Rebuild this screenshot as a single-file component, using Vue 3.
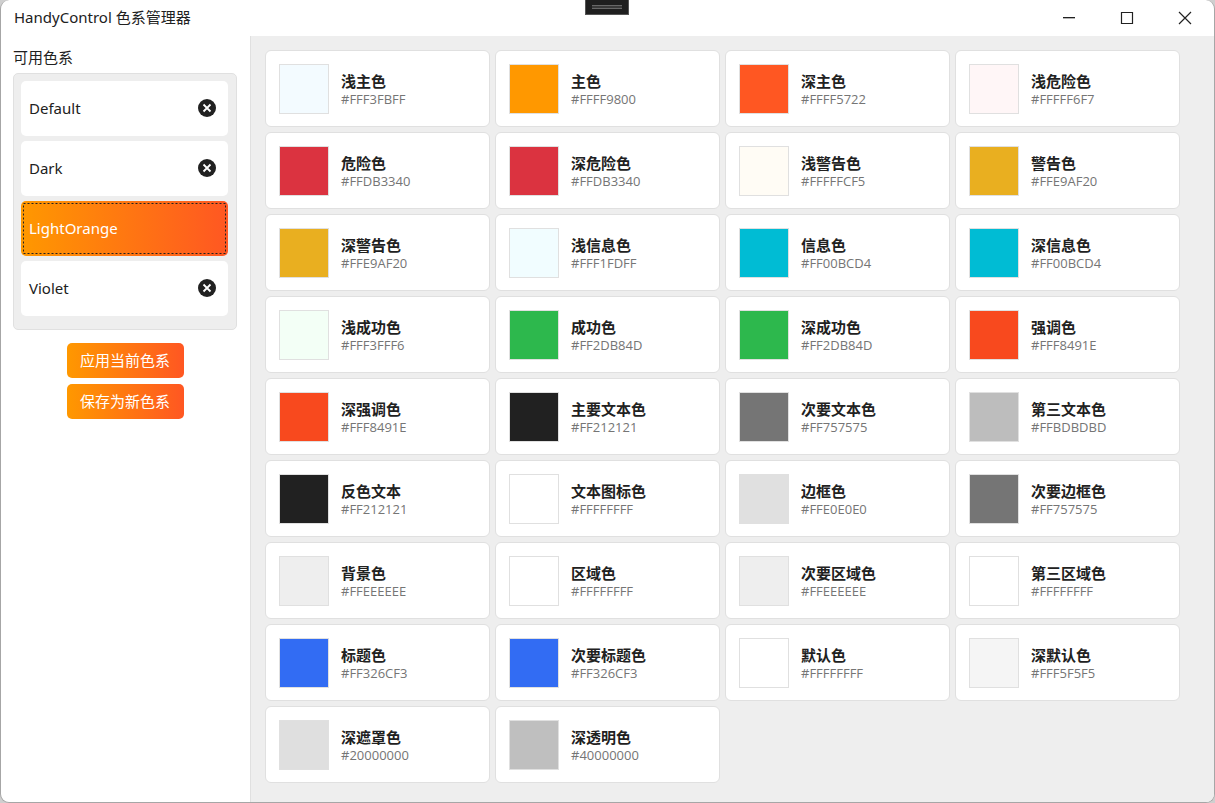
<template>
  <div class="window">
    <header class="titlebar">
      <h1>HandyControl 色系管理器</h1>
      <div class="window-buttons">
        <button type="button" aria-label="最小化">
          <svg width="14" height="14" viewBox="0 0 14 14">
            <path d="M1 6h12v1H1z" fill="#212121" />
            <path d="M1 7h12v1H1z" fill="#b4b4b4" />
          </svg>
        </button>
        <button type="button" aria-label="最大化">
          <svg width="14" height="14" viewBox="0 0 14 14">
            <path d="M1.5 1.5h11v11h-11z" fill="none" stroke="#212121" stroke-width="1.2" />
          </svg>
        </button>
        <button type="button" aria-label="关闭">
          <svg width="14" height="14" viewBox="0 0 14 14">
            <path d="M1 1l12 12M13 1L1 13" fill="none" stroke="#212121" stroke-width="1.2" />
          </svg>
        </button>
      </div>
      <div class="debug-handle"><span></span></div>
    </header>

    <div class="body">
      <aside class="sidebar">
        <h2>可用色系</h2>
        <ul class="schemes">
          <li
            v-for="scheme in schemes"
            :key="scheme"
            class="scheme"
            :class="{ selected: scheme === selected }"
          >
            <button type="button" class="scheme-name" @click="selected = scheme">{{ scheme }}</button>
            <button
              v-if="scheme !== selected"
              type="button"
              class="remove"
              aria-label="删除"
              @click="removeScheme(scheme)"
            >
              <svg width="18" height="18" viewBox="0 0 18 18">
                <circle cx="9" cy="9" r="9" fill="#212121" />
                <path d="M5.5 5.5l7 7M12.5 5.5l-7 7" stroke="#fff" stroke-width="1.8" />
              </svg>
            </button>
            <svg v-if="scheme === selected" class="focus-rect">
              <rect x="0.5" y="0.5" />
            </svg>
          </li>
        </ul>
        <div class="actions">
          <button type="button">应用当前色系</button>
          <button type="button">保存为新色系</button>
        </div>
      </aside>

      <main class="colors">
        <div v-for="color in colors" :key="color.name" class="card">
          <div class="swatch" :style="{ background: toCss(color.value) }"></div>
          <div class="card-text">
            <strong>{{ color.name }}</strong>
            <span>{{ color.value }}</span>
          </div>
        </div>
      </main>
    </div>
  </div>
</template>

<script setup>
import { ref } from "vue"

const schemes = ref(["Default", "Dark", "LightOrange", "Violet"])
const selected = ref("LightOrange")

const colors = ref([
  { name: "浅主色", value: "#FFF3FBFF" },
  { name: "主色", value: "#FFFF9800" },
  { name: "深主色", value: "#FFFF5722" },
  { name: "浅危险色", value: "#FFFFF6F7" },
  { name: "危险色", value: "#FFDB3340" },
  { name: "深危险色", value: "#FFDB3340" },
  { name: "浅警告色", value: "#FFFFFCF5" },
  { name: "警告色", value: "#FFE9AF20" },
  { name: "深警告色", value: "#FFE9AF20" },
  { name: "浅信息色", value: "#FFF1FDFF" },
  { name: "信息色", value: "#FF00BCD4" },
  { name: "深信息色", value: "#FF00BCD4" },
  { name: "浅成功色", value: "#FFF3FFF6" },
  { name: "成功色", value: "#FF2DB84D" },
  { name: "深成功色", value: "#FF2DB84D" },
  { name: "强调色", value: "#FFF8491E" },
  { name: "深强调色", value: "#FFF8491E" },
  { name: "主要文本色", value: "#FF212121" },
  { name: "次要文本色", value: "#FF757575" },
  { name: "第三文本色", value: "#FFBDBDBD" },
  { name: "反色文本", value: "#FF212121" },
  { name: "文本图标色", value: "#FFFFFFFF" },
  { name: "边框色", value: "#FFE0E0E0" },
  { name: "次要边框色", value: "#FF757575" },
  { name: "背景色", value: "#FFEEEEEE" },
  { name: "区域色", value: "#FFFFFFFF" },
  { name: "次要区域色", value: "#FFEEEEEE" },
  { name: "第三区域色", value: "#FFFFFFFF" },
  { name: "标题色", value: "#FF326CF3" },
  { name: "次要标题色", value: "#FF326CF3" },
  { name: "默认色", value: "#FFFFFFFF" },
  { name: "深默认色", value: "#FFF5F5F5" },
  { name: "深遮罩色", value: "#20000000" },
  { name: "深透明色", value: "#40000000" }
])

// #AARRGGBB -> #RRGGBBAA
function toCss(value) {
  return "#" + value.slice(3) + value.slice(1, 3)
}

function removeScheme(scheme) {
  schemes.value = schemes.value.filter(s => s !== scheme)
}
</script>

<style>
body {
  background: #cfcfcf;
}
</style>

<style scoped>
.window {
  display: flex;
  flex-direction: column;
  box-sizing: border-box;
  min-height: 100vh;
  border: 1px solid #a6a6a6;
  border-top: 0;
  border-radius: 9px;
  overflow: hidden;
  background: #fff;
  color: #212121;
  font-family: "Noto Sans", "Noto Sans CJK SC", sans-serif;
  font-size: 15px;
}

button {
  padding: 0;
  border: 0;
  background: none;
  color: inherit;
  font: inherit;
  cursor: pointer;
}

svg {
  display: block;
}

.titlebar {
  position: relative;
  display: flex;
  justify-content: space-between;
  height: 36px;
  padding-left: 13px;
}

h1,
h2 {
  margin: 0;
  font-size: 15px;
  font-weight: normal;
}

h1 {
  line-height: 34px;
}

.window-buttons {
  display: flex;
}

.window-buttons button {
  display: flex;
  align-items: center;
  justify-content: center;
  width: 58px;
}

.debug-handle {
  position: absolute;
  top: 0;
  left: 50%;
  box-sizing: border-box;
  width: 44px;
  height: 15px;
  margin-left: -23px;
  padding: 5px 6px;
  border: 1px solid #555;
  border-top: 0;
  background: #1f1f1f;
}

.debug-handle span {
  display: block;
  height: 2px;
  border: solid #686868;
  border-width: 1px 0;
  background: #3a3a3a;
}

.body {
  display: flex;
  flex: 1;
}

.sidebar {
  flex: none;
  box-sizing: border-box;
  width: 250px;
  padding: 10px 13px 0 12px;
  border-right: 1px solid #e0e0e0;
}

h2 {
  line-height: 22px;
}

.schemes {
  display: flex;
  flex-direction: column;
  gap: 5px;
  margin: 5px 0 0;
  padding: 7px 8px 13px 7px;
  border: 1px solid #e0e0e0;
  border-radius: 5px;
  background: #eee;
  list-style: none;
}

.scheme {
  position: relative;
  display: flex;
  align-items: center;
  box-sizing: border-box;
  height: 55px;
  padding-bottom: 2px;
  border-radius: 5px;
  background: #fff;
}

.scheme-name {
  flex: 1;
  align-self: stretch;
  padding-left: 8px;
  text-align: left;
}

.remove {
  margin-right: 12px;
}

.selected {
  background: linear-gradient(to right, #ff9800, #ff5722);
  color: #fff;
}

.focus-rect {
  position: absolute;
  top: 2px;
  left: 2px;
  width: calc(100% - 4px);
  height: calc(100% - 4px);
  pointer-events: none;
}

.focus-rect rect {
  width: calc(100% - 1px);
  height: calc(100% - 1px);
  fill: none;
  stroke: #212121;
  stroke-dasharray: 2 2;
}

.actions {
  display: flex;
  flex-direction: column;
  align-items: center;
  gap: 6px;
  margin-top: 13px;
}

.actions button {
  min-width: 117px;
  height: 35px;
  padding: 0 13px 2px;
  border-radius: 5px;
  background: linear-gradient(to right, #ff9800, #ff5722);
  color: #fff;
}

.colors {
  display: flex;
  flex: 1;
  flex-wrap: wrap;
  align-content: flex-start;
  gap: 5px;
  padding: 14px;
  background: #eee;
}

.card {
  display: flex;
  gap: 12px;
  box-sizing: border-box;
  width: 225px;
  height: 77px;
  padding: 13px;
  border: 1px solid #e0e0e0;
  border-radius: 6px;
  background: #fff;
}

.swatch {
  box-sizing: border-box;
  width: 50px;
  height: 50px;
  border: 1px solid #e0e0e0;
}

.card-text {
  display: flex;
  flex-direction: column;
  padding-top: 8px;
}

.card-text strong {
  line-height: 18px;
}

.card-text span {
  color: #757575;
  font-family: "Open Sans", sans-serif;
  font-size: 13px;
  line-height: 18px;
}
</style>
